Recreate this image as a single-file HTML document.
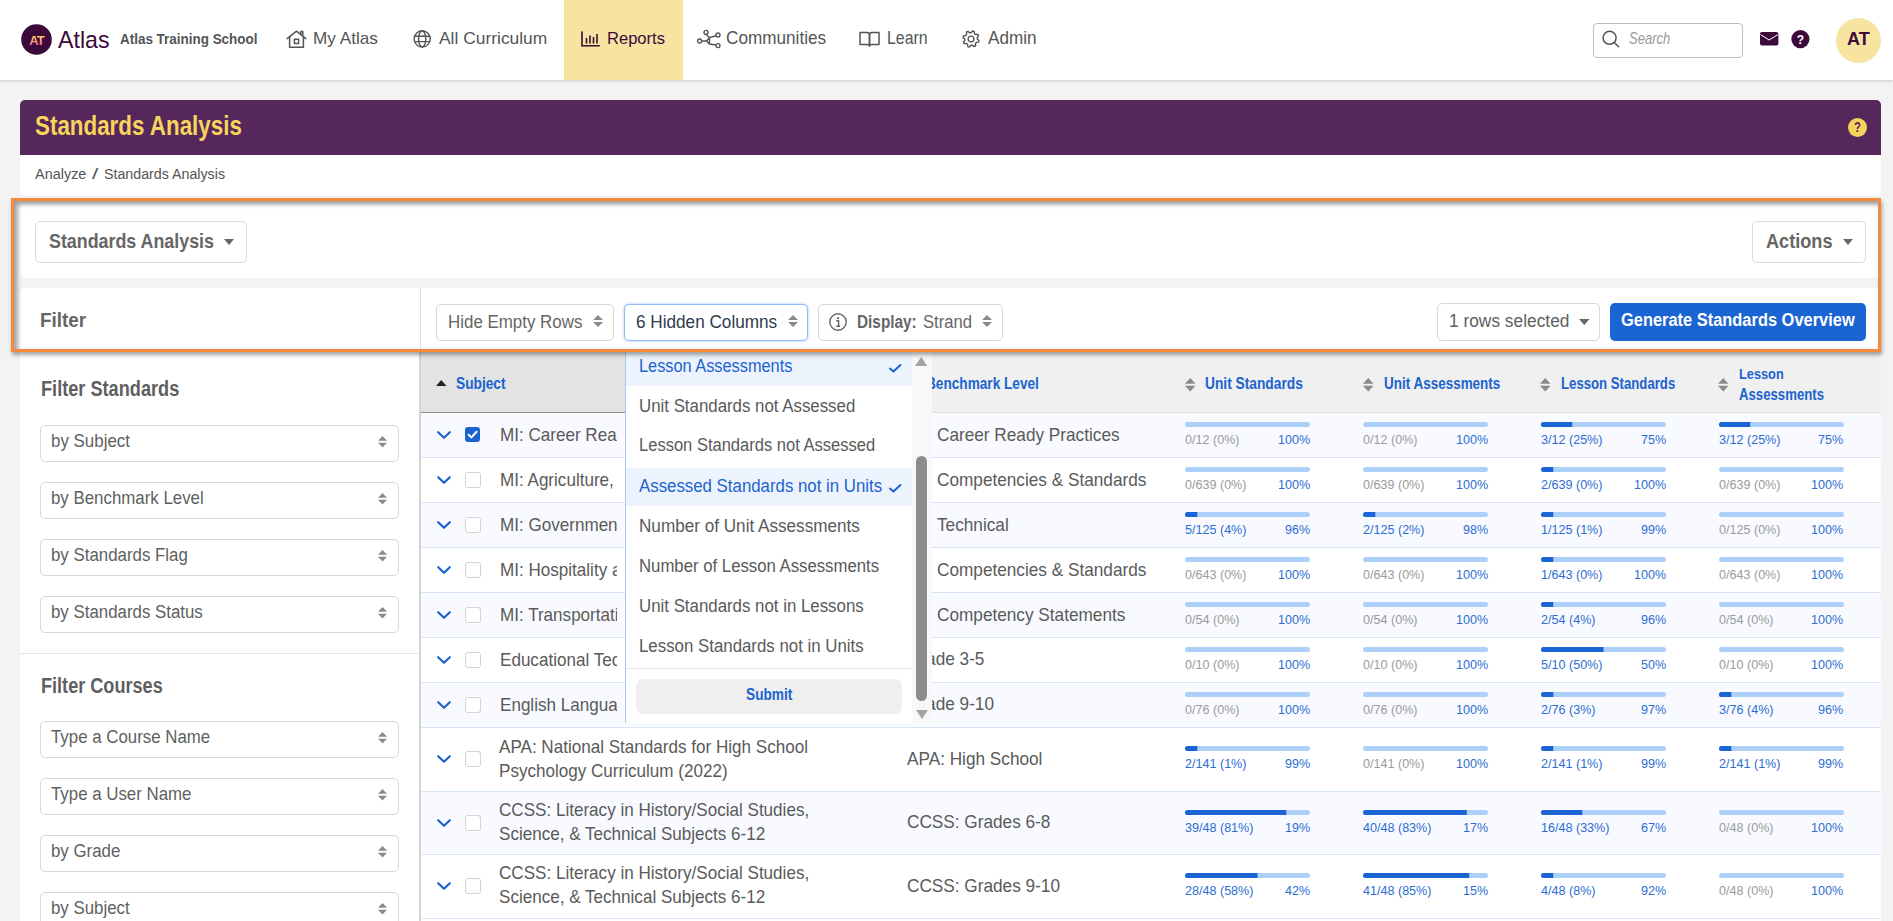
<!DOCTYPE html><html><head><meta charset="utf-8"><style>
html,body{margin:0;padding:0;}
body{width:1893px;height:921px;overflow:hidden;background:#f3f3f3;position:relative;font-family:"Liberation Sans",sans-serif;}
.a{position:absolute;box-sizing:border-box;}
.t{position:absolute;white-space:nowrap;transform-origin:0 0;}
svg.a{overflow:visible;}
</style></head><body>
<div class="a" style="left:0px;top:0px;width:1893px;height:80px;background:#fff;box-shadow:0 1px 3px rgba(0,0,0,.18);"></div>
<div class="a" style="left:564px;top:0px;width:119px;height:80px;background:#f8e4a1;"></div>
<svg class="a" style="left:21px;top:24px;" width="31" height="31" viewBox="0 0 31 31"><circle cx="15.5" cy="15.5" r="15.3" fill="#3b0a3b"/><defs><linearGradient id="lg" x1="0" y1="0" x2="0" y2="1"><stop offset="0.1" stop-color="#fbd65a"/><stop offset="0.55" stop-color="#f7a570"/><stop offset="1" stop-color="#ee4fb2"/></linearGradient></defs><text x="15.5" y="20.5" text-anchor="middle" font-family="Liberation Sans" font-weight="bold" font-size="13" fill="url(#lg)" letter-spacing="-1">AT</text></svg>
<span class="t" style="left:58.00px;top:28.81px;font-size:23.26px;line-height:23.26px;color:#3b0a3b;transform:scaleX(0.9961);">Atlas</span>
<span class="t" style="left:120.40px;top:31.03px;font-size:15.55px;line-height:15.55px;color:#555;font-weight:bold;transform:scaleX(0.8648);">Atlas Training School</span>
<span class="t" style="left:313.40px;top:30.18px;font-size:17.15px;line-height:17.15px;color:#555;transform:scaleX(1.0031);">My Atlas</span>
<span class="t" style="left:438.80px;top:30.06px;font-size:17.30px;line-height:17.30px;color:#555;transform:scaleX(1.0070);">All Curriculum</span>
<span class="t" style="left:607.40px;top:30.06px;font-size:17.30px;line-height:17.30px;color:#3b0a3b;transform:scaleX(0.9579);">Reports</span>
<span class="t" style="left:725.80px;top:30.11px;font-size:17.59px;line-height:17.59px;color:#555;transform:scaleX(0.9757);">Communities</span>
<span class="t" style="left:886.80px;top:30.11px;font-size:17.59px;line-height:17.59px;color:#555;transform:scaleX(0.9022);">Learn</span>
<span class="t" style="left:987.60px;top:30.11px;font-size:17.59px;line-height:17.59px;color:#555;transform:scaleX(0.9719);">Admin</span>
<div class="a" style="left:1593px;top:23px;width:150px;height:35px;background:#fff;border:1px solid #bdbdbd;border-radius:4px;"></div>
<span class="t" style="left:1629.00px;top:31.16px;font-size:15.99px;line-height:15.99px;color:#9a9a9a;font-style:italic;transform:scaleX(0.8166);">Search</span>
<div class="a" style="left:1836px;top:18px;width:45px;height:45px;background:#f8e4a1;border-radius:50%;"></div>
<span class="t" style="left:1847.30px;top:29.75px;font-size:18.60px;line-height:18.60px;color:#3b0a3b;font-weight:bold;transform:scaleX(0.9701);">AT</span>
<div class="a" style="left:20px;top:100px;width:1861px;height:55px;background:#55275a;border-radius:5px 5px 0 0;"></div>
<span class="t" style="left:35.10px;top:112.76px;font-size:26.74px;line-height:26.74px;color:#f7d45c;font-weight:bold;transform:scaleX(0.8370);">Standards Analysis</span>
<div class="a" style="left:1848px;top:118px;width:19px;height:19px;background:#f5d25a;border-radius:50%;"></div>
<span class="t" style="left:1854.00px;top:120.81px;font-size:13.81px;line-height:13.81px;color:#55275a;font-weight:bold;transform:scaleX(0.8284);">?</span>
<div class="a" style="left:20px;top:155px;width:1861px;height:41px;background:#fff;border-radius:0 0 5px 5px;"></div>
<span class="t" style="left:35.00px;top:166.67px;font-size:14.68px;line-height:14.68px;color:#555;transform:scaleX(0.9847);">Analyze</span>
<span class="t" style="left:92.20px;top:166.67px;font-size:14.68px;line-height:14.68px;color:#555;transform:scaleX(1.5366);">/</span>
<span class="t" style="left:103.80px;top:166.67px;font-size:14.68px;line-height:14.68px;color:#555;transform:scaleX(0.9696);">Standards Analysis</span>
<svg class="a" style="left:286px;top:30px;" width="21" height="18" viewBox="0 0 21 18"><g fill="none" stroke="#555" stroke-width="1.5" stroke-linejoin="round" stroke-linecap="round"><path d="M1.2 8.6 L10.5 1.2 L19.8 8.6"/><path d="M3.6 7 V17.2 H17.4 V7"/><path d="M14.8 3.6 V1.4 H16.8 V5.2"/><rect x="8.4" y="9.2" width="4.2" height="4.2"/></g></svg>
<svg class="a" style="left:413px;top:30px;" width="19" height="18" viewBox="0 0 19 18"><g fill="none" stroke="#555" stroke-width="1.4"><circle cx="9.2" cy="8.9" r="8.1"/><ellipse cx="9.2" cy="8.9" rx="3.6" ry="8.1"/><path d="M1.4 6.2 H17 M1.4 11.6 H17"/></g></svg>
<svg class="a" style="left:581px;top:31px;" width="19" height="16" viewBox="0 0 19 16"><g fill="none" stroke="#3b0a3b" stroke-width="1.6" stroke-linecap="round"><path d="M1 1 V14.8 H18.2"/><path d="M5.5 7.5 V12 M9 5 V12 M12.5 6.5 V12 M16 3.5 V12"/></g></svg>
<svg class="a" style="left:697px;top:30px;" width="24" height="18" viewBox="0 0 24 18"><g fill="none" stroke="#555" stroke-width="1.4"><circle cx="2.6" cy="11" r="2"/><circle cx="9" cy="2.4" r="2"/><circle cx="21" cy="5" r="2"/><circle cx="21" cy="15.6" r="2"/><path d="M4.6 11 H9.5 L12.5 7.5 L19.2 5.8 M9.5 11 L12.5 14 L19.2 15 M9 4.4 L12.5 7.5 M12.5 14 L12.5 7.5"/></g></svg>
<svg class="a" style="left:859px;top:31px;" width="21" height="16" viewBox="0 0 21 16"><g fill="none" stroke="#555" stroke-width="1.5" stroke-linejoin="round"><path d="M1 1.5 H8 Q10.5 1.5 10.5 4 V15 Q10.5 13.5 8 13.5 H1 Z"/><path d="M20 1.5 H13 Q10.5 1.5 10.5 4 V15 Q10.5 13.5 13 13.5 H20 Z"/></g></svg>
<svg class="a" style="left:962px;top:30px;" width="18" height="18" viewBox="0 0 18 18"><g fill="none" stroke="#555" stroke-width="1.4" stroke-linejoin="round"><path d="M9.00 2.70 L10.60 0.96 L12.14 1.42 L12.50 3.76 L13.45 4.55 L15.82 4.44 L16.58 5.86 L15.18 7.77 L15.30 9.00 L17.04 10.60 L16.58 12.14 L14.24 12.50 L13.45 13.45 L13.56 15.82 L12.14 16.58 L10.23 15.18 L9.00 15.30 L7.40 17.04 L5.86 16.58 L5.50 14.24 L4.55 13.45 L2.18 13.56 L1.42 12.14 L2.82 10.23 L2.70 9.00 L0.96 7.40 L1.42 5.86 L3.76 5.50 L4.55 4.55 L4.44 2.18 L5.86 1.42 L7.77 2.82Z"/><circle cx="9" cy="9" r="2.9"/></g></svg>
<svg class="a" style="left:1602px;top:30px;" width="18" height="18" viewBox="0 0 18 18"><g fill="none" stroke="#555" stroke-width="1.5" stroke-linecap="round"><circle cx="7.6" cy="7.8" r="6.5"/><path d="M12.3 12.5 L16.6 16.8"/></g></svg>
<svg class="a" style="left:1760px;top:32px;" width="19" height="14" viewBox="0 0 19 14"><rect x="0" y="0" width="18.4" height="13.6" rx="2" fill="#3b0a3b"/><path d="M0.5 2.6 L9.2 8 L17.9 2.6" fill="none" stroke="#fff" stroke-width="1"/></svg>
<svg class="a" style="left:1791px;top:30px;" width="19" height="19" viewBox="0 0 19 19"><circle cx="9.4" cy="9.1" r="9.1" fill="#3b0a3b"/><text x="9.4" y="13.6" text-anchor="middle" font-family="Liberation Sans" font-weight="bold" font-size="12" fill="#fff">?</text></svg>
<div class="a" style="left:20px;top:205px;width:1861px;height:73px;background:#fff;border-radius:5px;"></div>
<div class="a" style="left:20px;top:288px;width:1861px;height:633px;background:#fff;border-radius:5px 5px 0 0;"></div>
<div class="a" style="left:35px;top:221px;width:212px;height:42px;border:1px solid #dadada;border-radius:5px;background:#fff;"></div>
<span class="t" style="left:48.80px;top:230.82px;font-size:20.64px;line-height:20.64px;color:#666;font-weight:bold;transform:scaleX(0.8654);">Standards Analysis</span>
<svg class="a" style="left:224px;top:239px;" width="10" height="6" viewBox="0 0 10 6"><path d="M0 0 H10 L5 6 Z" fill="#666"/></svg>
<div class="a" style="left:1752px;top:221px;width:114px;height:42px;border:1px solid #dadada;border-radius:5px;background:#fff;"></div>
<span class="t" style="left:1765.90px;top:231.56px;font-size:19.77px;line-height:19.77px;color:#666;font-weight:bold;transform:scaleX(0.9171);">Actions</span>
<svg class="a" style="left:1843px;top:239px;" width="10" height="6" viewBox="0 0 10 6"><path d="M0 0 H10 L5 6 Z" fill="#666"/></svg>
<div class="a" style="left:420px;top:288px;width:1px;height:64px;background:#dedede;"></div>
<div class="a" style="left:419px;top:352px;width:2px;height:569px;background:#d4d4d4;"></div>
<span class="t" style="left:40.40px;top:309.97px;font-size:20.35px;line-height:20.35px;color:#666;font-weight:bold;transform:scaleX(0.9286);">Filter</span>
<div class="a" style="left:436px;top:304px;width:178px;height:37px;border:1px solid #d8d8d8;border-radius:5px;background:#fff;"></div>
<span class="t" style="left:447.80px;top:312.82px;font-size:18.75px;line-height:18.75px;color:#666;transform:scaleX(0.9020);">Hide Empty Rows</span>
<svg class="a" style="left:593px;top:315px;" width="10" height="12" viewBox="0 0 10 12"><path d="M5.0 0 L10 5.04 H0 Z M0 6.959999999999999 H10 L5.0 12 Z" fill="#8a8a8a"/></svg>
<div class="a" style="left:624px;top:304px;width:184px;height:37px;border:1px solid #8db9f4;border-radius:5px;background:#fff;box-shadow:0 0 2px 1px rgba(120,170,240,.35);"></div>
<span class="t" style="left:635.50px;top:312.82px;font-size:18.75px;line-height:18.75px;color:#2f3a4e;transform:scaleX(0.9154);">6 Hidden Columns</span>
<svg class="a" style="left:788px;top:315px;" width="10" height="12" viewBox="0 0 10 12"><path d="M5.0 0 L10 5.04 H0 Z M0 6.959999999999999 H10 L5.0 12 Z" fill="#8a8a8a"/></svg>
<div class="a" style="left:818px;top:304px;width:185px;height:37px;border:1px solid #d8d8d8;border-radius:5px;background:#fff;"></div>
<svg class="a" style="left:829px;top:313px;" width="18" height="18" viewBox="0 0 18 18"><circle cx="9" cy="9" r="8.2" fill="none" stroke="#666" stroke-width="1.4"/><circle cx="9" cy="5.2" r="1.1" fill="#666"/><path d="M7.2 7.8 H9.6 V13 M7.3 13.2 H11" fill="none" stroke="#666" stroke-width="1.4"/></svg>
<span class="t" style="left:857.00px;top:312.82px;font-size:18.75px;line-height:18.75px;color:#666;font-weight:bold;transform:scaleX(0.8184);">Display:</span>
<span class="t" style="left:922.50px;top:312.82px;font-size:18.75px;line-height:18.75px;color:#666;transform:scaleX(0.8869);">Strand</span>
<svg class="a" style="left:982px;top:315px;" width="10" height="12" viewBox="0 0 10 12"><path d="M5.0 0 L10 5.04 H0 Z M0 6.959999999999999 H10 L5.0 12 Z" fill="#8a8a8a"/></svg>
<div class="a" style="left:1437px;top:303px;width:163px;height:38px;border:1px solid #d8d8d8;border-radius:5px;background:#fff;"></div>
<span class="t" style="left:1449.00px;top:312.14px;font-size:18.02px;line-height:18.02px;color:#5f5f5f;transform:scaleX(0.9620);">1 rows selected</span>
<svg class="a" style="left:1579px;top:319px;" width="10.5" height="6" viewBox="0 0 10.5 6"><path d="M0 0 H10.5 L5.25 6 Z" fill="#666"/></svg>
<div class="a" style="left:1610px;top:303px;width:256px;height:38px;background:#1b64d3;border-radius:5px;"></div>
<span class="t" style="left:1621.40px;top:311.30px;font-size:18.90px;line-height:18.90px;color:#fff;font-weight:bold;transform:scaleX(0.8693);">Generate Standards Overview</span>
<span class="t" style="left:40.70px;top:378.71px;font-size:21.37px;line-height:21.37px;color:#5f5f5f;font-weight:bold;transform:scaleX(0.8502);">Filter Standards</span>
<div class="a" style="left:40px;top:425px;width:359px;height:37px;border:1px solid #d8d8d8;border-radius:5px;background:#fff;"></div>
<span class="t" style="left:51.30px;top:432.17px;font-size:18.46px;line-height:18.46px;color:#5f5f5f;transform:scaleX(0.9170);">by Subject</span>
<svg class="a" style="left:378px;top:435.5px;" width="9" height="11.5" viewBox="0 0 9 11.5"><path d="M4.5 0 L9 4.83 H0 Z M0 6.67 H9 L4.5 11.5 Z" fill="#8a8a8a"/></svg>
<div class="a" style="left:40px;top:482px;width:359px;height:37px;border:1px solid #d8d8d8;border-radius:5px;background:#fff;"></div>
<span class="t" style="left:51.30px;top:489.17px;font-size:18.46px;line-height:18.46px;color:#5f5f5f;transform:scaleX(0.9140);">by Benchmark Level</span>
<svg class="a" style="left:378px;top:492.5px;" width="9" height="11.5" viewBox="0 0 9 11.5"><path d="M4.5 0 L9 4.83 H0 Z M0 6.67 H9 L4.5 11.5 Z" fill="#8a8a8a"/></svg>
<div class="a" style="left:40px;top:539px;width:359px;height:37px;border:1px solid #d8d8d8;border-radius:5px;background:#fff;"></div>
<span class="t" style="left:51.30px;top:546.17px;font-size:18.46px;line-height:18.46px;color:#5f5f5f;transform:scaleX(0.9140);">by Standards Flag</span>
<svg class="a" style="left:378px;top:549.5px;" width="9" height="11.5" viewBox="0 0 9 11.5"><path d="M4.5 0 L9 4.83 H0 Z M0 6.67 H9 L4.5 11.5 Z" fill="#8a8a8a"/></svg>
<div class="a" style="left:40px;top:596px;width:359px;height:37px;border:1px solid #d8d8d8;border-radius:5px;background:#fff;"></div>
<span class="t" style="left:51.30px;top:603.17px;font-size:18.46px;line-height:18.46px;color:#5f5f5f;transform:scaleX(0.9140);">by Standards Status</span>
<svg class="a" style="left:378px;top:606.5px;" width="9" height="11.5" viewBox="0 0 9 11.5"><path d="M4.5 0 L9 4.83 H0 Z M0 6.67 H9 L4.5 11.5 Z" fill="#8a8a8a"/></svg>
<div class="a" style="left:20px;top:653px;width:400px;height:1px;background:#e4e4e4;"></div>
<span class="t" style="left:40.70px;top:675.36px;font-size:21.66px;line-height:21.66px;color:#5f5f5f;font-weight:bold;transform:scaleX(0.8359);">Filter Courses</span>
<div class="a" style="left:40px;top:721px;width:359px;height:37px;border:1px solid #d8d8d8;border-radius:5px;background:#fff;"></div>
<span class="t" style="left:51.30px;top:728.17px;font-size:18.46px;line-height:18.46px;color:#5f5f5f;transform:scaleX(0.9140);">Type a Course Name</span>
<svg class="a" style="left:378px;top:731.5px;" width="9" height="11.5" viewBox="0 0 9 11.5"><path d="M4.5 0 L9 4.83 H0 Z M0 6.67 H9 L4.5 11.5 Z" fill="#8a8a8a"/></svg>
<div class="a" style="left:40px;top:778px;width:359px;height:37px;border:1px solid #d8d8d8;border-radius:5px;background:#fff;"></div>
<span class="t" style="left:51.30px;top:785.17px;font-size:18.46px;line-height:18.46px;color:#5f5f5f;transform:scaleX(0.9140);">Type a User Name</span>
<svg class="a" style="left:378px;top:788.5px;" width="9" height="11.5" viewBox="0 0 9 11.5"><path d="M4.5 0 L9 4.83 H0 Z M0 6.67 H9 L4.5 11.5 Z" fill="#8a8a8a"/></svg>
<div class="a" style="left:40px;top:835px;width:359px;height:37px;border:1px solid #d8d8d8;border-radius:5px;background:#fff;"></div>
<span class="t" style="left:51.30px;top:842.17px;font-size:18.46px;line-height:18.46px;color:#5f5f5f;transform:scaleX(0.9140);">by Grade</span>
<svg class="a" style="left:378px;top:845.5px;" width="9" height="11.5" viewBox="0 0 9 11.5"><path d="M4.5 0 L9 4.83 H0 Z M0 6.67 H9 L4.5 11.5 Z" fill="#8a8a8a"/></svg>
<div class="a" style="left:40px;top:892px;width:359px;height:37px;border:1px solid #d8d8d8;border-radius:5px;background:#fff;"></div>
<span class="t" style="left:51.30px;top:899.17px;font-size:18.46px;line-height:18.46px;color:#5f5f5f;transform:scaleX(0.9140);">by Subject</span>
<svg class="a" style="left:378px;top:902.5px;" width="9" height="11.5" viewBox="0 0 9 11.5"><path d="M4.5 0 L9 4.83 H0 Z M0 6.67 H9 L4.5 11.5 Z" fill="#8a8a8a"/></svg>
<div class="a" style="left:421px;top:352px;width:1460px;height:60px;background:#f0f0f0;"></div>
<div class="a" style="left:421px;top:352px;width:475px;height:60px;background:#e3e3e3;"></div>
<div class="a" style="left:421px;top:412px;width:475px;height:1px;background:#8f8f8f;"></div>
<div class="a" style="left:896px;top:412px;width:985px;height:1px;background:#dcdcdc;"></div>
<svg class="a" style="left:436px;top:380px;" width="10.5" height="6" viewBox="0 0 10.5 6"><path d="M5.25 0 L10.5 6 H0 Z" fill="#222"/></svg>
<span class="t" style="left:456.20px;top:375.99px;font-size:15.84px;line-height:15.84px;color:#1b63cf;font-weight:bold;transform:scaleX(0.8664);">Subject</span>
<span class="t" style="left:926.00px;top:375.99px;font-size:15.84px;line-height:15.84px;color:#1b63cf;font-weight:bold;transform:scaleX(0.8610);">Benchmark Level</span>
<svg class="a" style="left:1185px;top:378px;" width="10.5" height="13.5" viewBox="0 0 10.5 13.5"><path d="M5.25 0 L10.5 5.67 H0 Z M0 7.829999999999999 H10.5 L5.25 13.5 Z" fill="#8a8a8a"/></svg>
<span class="t" style="left:1205.40px;top:375.99px;font-size:15.84px;line-height:15.84px;color:#1b63cf;font-weight:bold;transform:scaleX(0.8687);">Unit Standards</span>
<svg class="a" style="left:1363px;top:378px;" width="10.5" height="13.5" viewBox="0 0 10.5 13.5"><path d="M5.25 0 L10.5 5.67 H0 Z M0 7.829999999999999 H10.5 L5.25 13.5 Z" fill="#8a8a8a"/></svg>
<span class="t" style="left:1383.50px;top:375.99px;font-size:15.84px;line-height:15.84px;color:#1b63cf;font-weight:bold;transform:scaleX(0.8513);">Unit Assessments</span>
<svg class="a" style="left:1540px;top:378px;" width="10.5" height="13.5" viewBox="0 0 10.5 13.5"><path d="M5.25 0 L10.5 5.67 H0 Z M0 7.829999999999999 H10.5 L5.25 13.5 Z" fill="#8a8a8a"/></svg>
<span class="t" style="left:1561.30px;top:375.99px;font-size:15.84px;line-height:15.84px;color:#1b63cf;font-weight:bold;transform:scaleX(0.8326);">Lesson Standards</span>
<svg class="a" style="left:1718px;top:378px;" width="10.5" height="13.5" viewBox="0 0 10.5 13.5"><path d="M5.25 0 L10.5 5.67 H0 Z M0 7.829999999999999 H10.5 L5.25 13.5 Z" fill="#8a8a8a"/></svg>
<span class="t" style="left:1739.00px;top:365.75px;font-size:15.41px;line-height:15.41px;color:#1b63cf;font-weight:bold;transform:scaleX(0.8293);">Lesson</span>
<span class="t" style="left:1739.00px;top:386.61px;font-size:15.70px;line-height:15.70px;color:#1b63cf;font-weight:bold;transform:scaleX(0.8405);">Assessments</span>
<div class="a" style="left:421px;top:413px;width:1460px;height:44px;background:#f8faff;"></div>
<div class="a" style="left:421px;top:457px;width:1460px;height:1px;background:#d8e6f8;"></div>
<svg class="a" style="left:437px;top:430.5px;" width="14" height="8" viewBox="0 0 14 8"><path d="M1.2 1.2 L7 6.8 L12.8 1.2" fill="none" stroke="#1b63cf" stroke-width="2.2" stroke-linecap="round" stroke-linejoin="round"/></svg>
<svg class="a" style="left:465px;top:427.0px;" width="15" height="15" viewBox="0 0 15 15"><rect x="0" y="0" width="15" height="15" rx="3" fill="#1b63cf"/><path d="M3.6 7.8 L6.4 10.4 L11.6 4.8" fill="none" stroke="#fff" stroke-width="2" stroke-linecap="round" stroke-linejoin="round"/></svg>
<div class="a" style="left:421px;top:413px;width:196px;height:44px;overflow:hidden;">
<span class="t" style="left:78.60px;top:12.92px;font-size:18.17px;line-height:18.17px;color:#5a5a5a;transform:scaleX(0.9400);">MI: Career Ready Practices</span>
</div>
<span class="t" style="left:937.20px;top:425.89px;font-size:18.31px;line-height:18.31px;color:#5a5a5a;transform:scaleX(0.9400);">Career Ready Practices</span>
<svg class="a" style="left:1185px;top:421.9px;" width="125" height="5" viewBox="0 0 125 5"><rect x="0" y="0" width="125" height="5" rx="2.5" fill="#acd0fa"/></svg>
<span class="t" style="left:1185.00px;top:432.65px;font-size:13.52px;line-height:13.52px;color:#9a9a9a;transform:scaleX(0.9300);">0/12 (0%)</span>
<span class="t" style="left:1277.87px;top:432.65px;font-size:13.52px;line-height:13.52px;color:#2d6dd2;transform:scaleX(0.9300);">100%</span>
<svg class="a" style="left:1363px;top:421.9px;" width="125" height="5" viewBox="0 0 125 5"><rect x="0" y="0" width="125" height="5" rx="2.5" fill="#acd0fa"/></svg>
<span class="t" style="left:1363.00px;top:432.65px;font-size:13.52px;line-height:13.52px;color:#9a9a9a;transform:scaleX(0.9300);">0/12 (0%)</span>
<span class="t" style="left:1455.87px;top:432.65px;font-size:13.52px;line-height:13.52px;color:#2d6dd2;transform:scaleX(0.9300);">100%</span>
<svg class="a" style="left:1541px;top:421.9px;" width="125" height="5" viewBox="0 0 125 5"><rect x="0" y="0" width="125" height="5" rx="2.5" fill="#acd0fa"/><path d="M2.5 0 H31.25 V5 H2.5 A2.5 2.5 0 0 1 2.5 0 Z" fill="#1b64d3"/></svg>
<span class="t" style="left:1541.00px;top:432.65px;font-size:13.52px;line-height:13.52px;color:#2d6dd2;transform:scaleX(0.9300);">3/12 (25%)</span>
<span class="t" style="left:1640.89px;top:432.65px;font-size:13.52px;line-height:13.52px;color:#2d6dd2;transform:scaleX(0.9300);">75%</span>
<svg class="a" style="left:1718.5px;top:421.9px;" width="125" height="5" viewBox="0 0 125 5"><rect x="0" y="0" width="125" height="5" rx="2.5" fill="#acd0fa"/><path d="M2.5 0 H31.25 V5 H2.5 A2.5 2.5 0 0 1 2.5 0 Z" fill="#1b64d3"/></svg>
<span class="t" style="left:1718.50px;top:432.65px;font-size:13.52px;line-height:13.52px;color:#2d6dd2;transform:scaleX(0.9300);">3/12 (25%)</span>
<span class="t" style="left:1818.39px;top:432.65px;font-size:13.52px;line-height:13.52px;color:#2d6dd2;transform:scaleX(0.9300);">75%</span>
<div class="a" style="left:421px;top:458px;width:1460px;height:44px;background:#ffffff;"></div>
<div class="a" style="left:421px;top:502px;width:1460px;height:1px;background:#d8e6f8;"></div>
<svg class="a" style="left:437px;top:475.5px;" width="14" height="8" viewBox="0 0 14 8"><path d="M1.2 1.2 L7 6.8 L12.8 1.2" fill="none" stroke="#1b63cf" stroke-width="2.2" stroke-linecap="round" stroke-linejoin="round"/></svg>
<div class="a" style="left:465px;top:471.5px;width:16px;height:16px;border:1px solid #d3d3d3;border-radius:3px;background:#fff;"></div>
<div class="a" style="left:421px;top:458px;width:196px;height:44px;overflow:hidden;">
<span class="t" style="left:78.60px;top:12.92px;font-size:18.17px;line-height:18.17px;color:#5a5a5a;transform:scaleX(0.9400);">MI: Agriculture, Food and Natural Resources</span>
</div>
<span class="t" style="left:937.20px;top:470.89px;font-size:18.31px;line-height:18.31px;color:#5a5a5a;transform:scaleX(0.9400);">Competencies &amp; Standards</span>
<svg class="a" style="left:1185px;top:466.9px;" width="125" height="5" viewBox="0 0 125 5"><rect x="0" y="0" width="125" height="5" rx="2.5" fill="#acd0fa"/></svg>
<span class="t" style="left:1185.00px;top:477.65px;font-size:13.52px;line-height:13.52px;color:#9a9a9a;transform:scaleX(0.9300);">0/639 (0%)</span>
<span class="t" style="left:1277.87px;top:477.65px;font-size:13.52px;line-height:13.52px;color:#2d6dd2;transform:scaleX(0.9300);">100%</span>
<svg class="a" style="left:1363px;top:466.9px;" width="125" height="5" viewBox="0 0 125 5"><rect x="0" y="0" width="125" height="5" rx="2.5" fill="#acd0fa"/></svg>
<span class="t" style="left:1363.00px;top:477.65px;font-size:13.52px;line-height:13.52px;color:#9a9a9a;transform:scaleX(0.9300);">0/639 (0%)</span>
<span class="t" style="left:1455.87px;top:477.65px;font-size:13.52px;line-height:13.52px;color:#2d6dd2;transform:scaleX(0.9300);">100%</span>
<svg class="a" style="left:1541px;top:466.9px;" width="125" height="5" viewBox="0 0 125 5"><rect x="0" y="0" width="125" height="5" rx="2.5" fill="#acd0fa"/><path d="M2.5 0 H12.3 V5 H2.5 A2.5 2.5 0 0 1 2.5 0 Z" fill="#1b64d3"/></svg>
<span class="t" style="left:1541.00px;top:477.65px;font-size:13.52px;line-height:13.52px;color:#2d6dd2;transform:scaleX(0.9300);">2/639 (0%)</span>
<span class="t" style="left:1633.87px;top:477.65px;font-size:13.52px;line-height:13.52px;color:#2d6dd2;transform:scaleX(0.9300);">100%</span>
<svg class="a" style="left:1718.5px;top:466.9px;" width="125" height="5" viewBox="0 0 125 5"><rect x="0" y="0" width="125" height="5" rx="2.5" fill="#acd0fa"/></svg>
<span class="t" style="left:1718.50px;top:477.65px;font-size:13.52px;line-height:13.52px;color:#9a9a9a;transform:scaleX(0.9300);">0/639 (0%)</span>
<span class="t" style="left:1811.37px;top:477.65px;font-size:13.52px;line-height:13.52px;color:#2d6dd2;transform:scaleX(0.9300);">100%</span>
<div class="a" style="left:421px;top:503px;width:1460px;height:44px;background:#f8faff;"></div>
<div class="a" style="left:421px;top:547px;width:1460px;height:1px;background:#d8e6f8;"></div>
<svg class="a" style="left:437px;top:520.5px;" width="14" height="8" viewBox="0 0 14 8"><path d="M1.2 1.2 L7 6.8 L12.8 1.2" fill="none" stroke="#1b63cf" stroke-width="2.2" stroke-linecap="round" stroke-linejoin="round"/></svg>
<div class="a" style="left:465px;top:516.5px;width:16px;height:16px;border:1px solid #d3d3d3;border-radius:3px;background:#fff;"></div>
<div class="a" style="left:421px;top:503px;width:196px;height:44px;overflow:hidden;">
<span class="t" style="left:78.60px;top:12.92px;font-size:18.17px;line-height:18.17px;color:#5a5a5a;transform:scaleX(0.9400);">MI: Government and Public Administration</span>
</div>
<span class="t" style="left:937.20px;top:515.89px;font-size:18.31px;line-height:18.31px;color:#5a5a5a;transform:scaleX(0.9400);">Technical</span>
<svg class="a" style="left:1185px;top:511.9px;" width="125" height="5" viewBox="0 0 125 5"><rect x="0" y="0" width="125" height="5" rx="2.5" fill="#acd0fa"/><path d="M2.5 0 H12.3 V5 H2.5 A2.5 2.5 0 0 1 2.5 0 Z" fill="#1b64d3"/></svg>
<span class="t" style="left:1185.00px;top:522.65px;font-size:13.52px;line-height:13.52px;color:#2d6dd2;transform:scaleX(0.9300);">5/125 (4%)</span>
<span class="t" style="left:1284.89px;top:522.65px;font-size:13.52px;line-height:13.52px;color:#2d6dd2;transform:scaleX(0.9300);">96%</span>
<svg class="a" style="left:1363px;top:511.9px;" width="125" height="5" viewBox="0 0 125 5"><rect x="0" y="0" width="125" height="5" rx="2.5" fill="#acd0fa"/><path d="M2.5 0 H12.3 V5 H2.5 A2.5 2.5 0 0 1 2.5 0 Z" fill="#1b64d3"/></svg>
<span class="t" style="left:1363.00px;top:522.65px;font-size:13.52px;line-height:13.52px;color:#2d6dd2;transform:scaleX(0.9300);">2/125 (2%)</span>
<span class="t" style="left:1462.89px;top:522.65px;font-size:13.52px;line-height:13.52px;color:#2d6dd2;transform:scaleX(0.9300);">98%</span>
<svg class="a" style="left:1541px;top:511.9px;" width="125" height="5" viewBox="0 0 125 5"><rect x="0" y="0" width="125" height="5" rx="2.5" fill="#acd0fa"/><path d="M2.5 0 H12.3 V5 H2.5 A2.5 2.5 0 0 1 2.5 0 Z" fill="#1b64d3"/></svg>
<span class="t" style="left:1541.00px;top:522.65px;font-size:13.52px;line-height:13.52px;color:#2d6dd2;transform:scaleX(0.9300);">1/125 (1%)</span>
<span class="t" style="left:1640.89px;top:522.65px;font-size:13.52px;line-height:13.52px;color:#2d6dd2;transform:scaleX(0.9300);">99%</span>
<svg class="a" style="left:1718.5px;top:511.9px;" width="125" height="5" viewBox="0 0 125 5"><rect x="0" y="0" width="125" height="5" rx="2.5" fill="#acd0fa"/></svg>
<span class="t" style="left:1718.50px;top:522.65px;font-size:13.52px;line-height:13.52px;color:#9a9a9a;transform:scaleX(0.9300);">0/125 (0%)</span>
<span class="t" style="left:1811.37px;top:522.65px;font-size:13.52px;line-height:13.52px;color:#2d6dd2;transform:scaleX(0.9300);">100%</span>
<div class="a" style="left:421px;top:548px;width:1460px;height:44px;background:#ffffff;"></div>
<div class="a" style="left:421px;top:592px;width:1460px;height:1px;background:#d8e6f8;"></div>
<svg class="a" style="left:437px;top:565.5px;" width="14" height="8" viewBox="0 0 14 8"><path d="M1.2 1.2 L7 6.8 L12.8 1.2" fill="none" stroke="#1b63cf" stroke-width="2.2" stroke-linecap="round" stroke-linejoin="round"/></svg>
<div class="a" style="left:465px;top:561.5px;width:16px;height:16px;border:1px solid #d3d3d3;border-radius:3px;background:#fff;"></div>
<div class="a" style="left:421px;top:548px;width:196px;height:44px;overflow:hidden;">
<span class="t" style="left:78.60px;top:12.92px;font-size:18.17px;line-height:18.17px;color:#5a5a5a;transform:scaleX(0.9400);">MI: Hospitality and Tourism</span>
</div>
<span class="t" style="left:937.20px;top:560.89px;font-size:18.31px;line-height:18.31px;color:#5a5a5a;transform:scaleX(0.9400);">Competencies &amp; Standards</span>
<svg class="a" style="left:1185px;top:556.9px;" width="125" height="5" viewBox="0 0 125 5"><rect x="0" y="0" width="125" height="5" rx="2.5" fill="#acd0fa"/></svg>
<span class="t" style="left:1185.00px;top:567.65px;font-size:13.52px;line-height:13.52px;color:#9a9a9a;transform:scaleX(0.9300);">0/643 (0%)</span>
<span class="t" style="left:1277.87px;top:567.65px;font-size:13.52px;line-height:13.52px;color:#2d6dd2;transform:scaleX(0.9300);">100%</span>
<svg class="a" style="left:1363px;top:556.9px;" width="125" height="5" viewBox="0 0 125 5"><rect x="0" y="0" width="125" height="5" rx="2.5" fill="#acd0fa"/></svg>
<span class="t" style="left:1363.00px;top:567.65px;font-size:13.52px;line-height:13.52px;color:#9a9a9a;transform:scaleX(0.9300);">0/643 (0%)</span>
<span class="t" style="left:1455.87px;top:567.65px;font-size:13.52px;line-height:13.52px;color:#2d6dd2;transform:scaleX(0.9300);">100%</span>
<svg class="a" style="left:1541px;top:556.9px;" width="125" height="5" viewBox="0 0 125 5"><rect x="0" y="0" width="125" height="5" rx="2.5" fill="#acd0fa"/><path d="M2.5 0 H12.3 V5 H2.5 A2.5 2.5 0 0 1 2.5 0 Z" fill="#1b64d3"/></svg>
<span class="t" style="left:1541.00px;top:567.65px;font-size:13.52px;line-height:13.52px;color:#2d6dd2;transform:scaleX(0.9300);">1/643 (0%)</span>
<span class="t" style="left:1633.87px;top:567.65px;font-size:13.52px;line-height:13.52px;color:#2d6dd2;transform:scaleX(0.9300);">100%</span>
<svg class="a" style="left:1718.5px;top:556.9px;" width="125" height="5" viewBox="0 0 125 5"><rect x="0" y="0" width="125" height="5" rx="2.5" fill="#acd0fa"/></svg>
<span class="t" style="left:1718.50px;top:567.65px;font-size:13.52px;line-height:13.52px;color:#9a9a9a;transform:scaleX(0.9300);">0/643 (0%)</span>
<span class="t" style="left:1811.37px;top:567.65px;font-size:13.52px;line-height:13.52px;color:#2d6dd2;transform:scaleX(0.9300);">100%</span>
<div class="a" style="left:421px;top:593px;width:1460px;height:44px;background:#f8faff;"></div>
<div class="a" style="left:421px;top:637px;width:1460px;height:1px;background:#d8e6f8;"></div>
<svg class="a" style="left:437px;top:610.5px;" width="14" height="8" viewBox="0 0 14 8"><path d="M1.2 1.2 L7 6.8 L12.8 1.2" fill="none" stroke="#1b63cf" stroke-width="2.2" stroke-linecap="round" stroke-linejoin="round"/></svg>
<div class="a" style="left:465px;top:606.5px;width:16px;height:16px;border:1px solid #d3d3d3;border-radius:3px;background:#fff;"></div>
<div class="a" style="left:421px;top:593px;width:196px;height:44px;overflow:hidden;">
<span class="t" style="left:78.60px;top:12.92px;font-size:18.17px;line-height:18.17px;color:#5a5a5a;transform:scaleX(0.9400);">MI: Transportation, Distribution and Logistics</span>
</div>
<span class="t" style="left:937.20px;top:605.89px;font-size:18.31px;line-height:18.31px;color:#5a5a5a;transform:scaleX(0.9400);">Competency Statements</span>
<svg class="a" style="left:1185px;top:601.9px;" width="125" height="5" viewBox="0 0 125 5"><rect x="0" y="0" width="125" height="5" rx="2.5" fill="#acd0fa"/></svg>
<span class="t" style="left:1185.00px;top:612.65px;font-size:13.52px;line-height:13.52px;color:#9a9a9a;transform:scaleX(0.9300);">0/54 (0%)</span>
<span class="t" style="left:1277.87px;top:612.65px;font-size:13.52px;line-height:13.52px;color:#2d6dd2;transform:scaleX(0.9300);">100%</span>
<svg class="a" style="left:1363px;top:601.9px;" width="125" height="5" viewBox="0 0 125 5"><rect x="0" y="0" width="125" height="5" rx="2.5" fill="#acd0fa"/></svg>
<span class="t" style="left:1363.00px;top:612.65px;font-size:13.52px;line-height:13.52px;color:#9a9a9a;transform:scaleX(0.9300);">0/54 (0%)</span>
<span class="t" style="left:1455.87px;top:612.65px;font-size:13.52px;line-height:13.52px;color:#2d6dd2;transform:scaleX(0.9300);">100%</span>
<svg class="a" style="left:1541px;top:601.9px;" width="125" height="5" viewBox="0 0 125 5"><rect x="0" y="0" width="125" height="5" rx="2.5" fill="#acd0fa"/><path d="M2.5 0 H12.3 V5 H2.5 A2.5 2.5 0 0 1 2.5 0 Z" fill="#1b64d3"/></svg>
<span class="t" style="left:1541.00px;top:612.65px;font-size:13.52px;line-height:13.52px;color:#2d6dd2;transform:scaleX(0.9300);">2/54 (4%)</span>
<span class="t" style="left:1640.89px;top:612.65px;font-size:13.52px;line-height:13.52px;color:#2d6dd2;transform:scaleX(0.9300);">96%</span>
<svg class="a" style="left:1718.5px;top:601.9px;" width="125" height="5" viewBox="0 0 125 5"><rect x="0" y="0" width="125" height="5" rx="2.5" fill="#acd0fa"/></svg>
<span class="t" style="left:1718.50px;top:612.65px;font-size:13.52px;line-height:13.52px;color:#9a9a9a;transform:scaleX(0.9300);">0/54 (0%)</span>
<span class="t" style="left:1811.37px;top:612.65px;font-size:13.52px;line-height:13.52px;color:#2d6dd2;transform:scaleX(0.9300);">100%</span>
<div class="a" style="left:421px;top:638px;width:1460px;height:44px;background:#ffffff;"></div>
<div class="a" style="left:421px;top:682px;width:1460px;height:1px;background:#d8e6f8;"></div>
<svg class="a" style="left:437px;top:655.5px;" width="14" height="8" viewBox="0 0 14 8"><path d="M1.2 1.2 L7 6.8 L12.8 1.2" fill="none" stroke="#1b63cf" stroke-width="2.2" stroke-linecap="round" stroke-linejoin="round"/></svg>
<div class="a" style="left:465px;top:651.5px;width:16px;height:16px;border:1px solid #d3d3d3;border-radius:3px;background:#fff;"></div>
<div class="a" style="left:421px;top:638px;width:196px;height:44px;overflow:hidden;">
<span class="t" style="left:78.60px;top:12.92px;font-size:18.17px;line-height:18.17px;color:#5a5a5a;transform:scaleX(0.9400);">Educational Technology Standards</span>
</div>
<span class="t" style="left:907.00px;top:650.29px;font-size:18.31px;line-height:18.31px;color:#5a5a5a;transform:scaleX(0.9400);">Grade 3-5</span>
<svg class="a" style="left:1185px;top:646.9px;" width="125" height="5" viewBox="0 0 125 5"><rect x="0" y="0" width="125" height="5" rx="2.5" fill="#acd0fa"/></svg>
<span class="t" style="left:1185.00px;top:657.65px;font-size:13.52px;line-height:13.52px;color:#9a9a9a;transform:scaleX(0.9300);">0/10 (0%)</span>
<span class="t" style="left:1277.87px;top:657.65px;font-size:13.52px;line-height:13.52px;color:#2d6dd2;transform:scaleX(0.9300);">100%</span>
<svg class="a" style="left:1363px;top:646.9px;" width="125" height="5" viewBox="0 0 125 5"><rect x="0" y="0" width="125" height="5" rx="2.5" fill="#acd0fa"/></svg>
<span class="t" style="left:1363.00px;top:657.65px;font-size:13.52px;line-height:13.52px;color:#9a9a9a;transform:scaleX(0.9300);">0/10 (0%)</span>
<span class="t" style="left:1455.87px;top:657.65px;font-size:13.52px;line-height:13.52px;color:#2d6dd2;transform:scaleX(0.9300);">100%</span>
<svg class="a" style="left:1541px;top:646.9px;" width="125" height="5" viewBox="0 0 125 5"><rect x="0" y="0" width="125" height="5" rx="2.5" fill="#acd0fa"/><path d="M2.5 0 H62.5 V5 H2.5 A2.5 2.5 0 0 1 2.5 0 Z" fill="#1b64d3"/></svg>
<span class="t" style="left:1541.00px;top:657.65px;font-size:13.52px;line-height:13.52px;color:#2d6dd2;transform:scaleX(0.9300);">5/10 (50%)</span>
<span class="t" style="left:1640.89px;top:657.65px;font-size:13.52px;line-height:13.52px;color:#2d6dd2;transform:scaleX(0.9300);">50%</span>
<svg class="a" style="left:1718.5px;top:646.9px;" width="125" height="5" viewBox="0 0 125 5"><rect x="0" y="0" width="125" height="5" rx="2.5" fill="#acd0fa"/></svg>
<span class="t" style="left:1718.50px;top:657.65px;font-size:13.52px;line-height:13.52px;color:#9a9a9a;transform:scaleX(0.9300);">0/10 (0%)</span>
<span class="t" style="left:1811.37px;top:657.65px;font-size:13.52px;line-height:13.52px;color:#2d6dd2;transform:scaleX(0.9300);">100%</span>
<div class="a" style="left:421px;top:683px;width:1460px;height:44px;background:#f8faff;"></div>
<div class="a" style="left:421px;top:727px;width:1460px;height:1px;background:#d8e6f8;"></div>
<svg class="a" style="left:437px;top:700.5px;" width="14" height="8" viewBox="0 0 14 8"><path d="M1.2 1.2 L7 6.8 L12.8 1.2" fill="none" stroke="#1b63cf" stroke-width="2.2" stroke-linecap="round" stroke-linejoin="round"/></svg>
<div class="a" style="left:465px;top:696.5px;width:16px;height:16px;border:1px solid #d3d3d3;border-radius:3px;background:#fff;"></div>
<div class="a" style="left:421px;top:683px;width:196px;height:44px;overflow:hidden;">
<span class="t" style="left:78.60px;top:12.92px;font-size:18.17px;line-height:18.17px;color:#5a5a5a;transform:scaleX(0.9400);">English Language Proficiency</span>
</div>
<span class="t" style="left:907.00px;top:695.29px;font-size:18.31px;line-height:18.31px;color:#5a5a5a;transform:scaleX(0.9400);">Grade 9-10</span>
<svg class="a" style="left:1185px;top:691.9px;" width="125" height="5" viewBox="0 0 125 5"><rect x="0" y="0" width="125" height="5" rx="2.5" fill="#acd0fa"/></svg>
<span class="t" style="left:1185.00px;top:702.65px;font-size:13.52px;line-height:13.52px;color:#9a9a9a;transform:scaleX(0.9300);">0/76 (0%)</span>
<span class="t" style="left:1277.87px;top:702.65px;font-size:13.52px;line-height:13.52px;color:#2d6dd2;transform:scaleX(0.9300);">100%</span>
<svg class="a" style="left:1363px;top:691.9px;" width="125" height="5" viewBox="0 0 125 5"><rect x="0" y="0" width="125" height="5" rx="2.5" fill="#acd0fa"/></svg>
<span class="t" style="left:1363.00px;top:702.65px;font-size:13.52px;line-height:13.52px;color:#9a9a9a;transform:scaleX(0.9300);">0/76 (0%)</span>
<span class="t" style="left:1455.87px;top:702.65px;font-size:13.52px;line-height:13.52px;color:#2d6dd2;transform:scaleX(0.9300);">100%</span>
<svg class="a" style="left:1541px;top:691.9px;" width="125" height="5" viewBox="0 0 125 5"><rect x="0" y="0" width="125" height="5" rx="2.5" fill="#acd0fa"/><path d="M2.5 0 H12.3 V5 H2.5 A2.5 2.5 0 0 1 2.5 0 Z" fill="#1b64d3"/></svg>
<span class="t" style="left:1541.00px;top:702.65px;font-size:13.52px;line-height:13.52px;color:#2d6dd2;transform:scaleX(0.9300);">2/76 (3%)</span>
<span class="t" style="left:1640.89px;top:702.65px;font-size:13.52px;line-height:13.52px;color:#2d6dd2;transform:scaleX(0.9300);">97%</span>
<svg class="a" style="left:1718.5px;top:691.9px;" width="125" height="5" viewBox="0 0 125 5"><rect x="0" y="0" width="125" height="5" rx="2.5" fill="#acd0fa"/><path d="M2.5 0 H12.3 V5 H2.5 A2.5 2.5 0 0 1 2.5 0 Z" fill="#1b64d3"/></svg>
<span class="t" style="left:1718.50px;top:702.65px;font-size:13.52px;line-height:13.52px;color:#2d6dd2;transform:scaleX(0.9300);">3/76 (4%)</span>
<span class="t" style="left:1818.39px;top:702.65px;font-size:13.52px;line-height:13.52px;color:#2d6dd2;transform:scaleX(0.9300);">96%</span>
<div class="a" style="left:421px;top:728px;width:1460px;height:63px;background:#ffffff;"></div>
<div class="a" style="left:421px;top:791px;width:1460px;height:1px;background:#d8e6f8;"></div>
<svg class="a" style="left:437px;top:755.0px;" width="14" height="8" viewBox="0 0 14 8"><path d="M1.2 1.2 L7 6.8 L12.8 1.2" fill="none" stroke="#1b63cf" stroke-width="2.2" stroke-linecap="round" stroke-linejoin="round"/></svg>
<div class="a" style="left:465px;top:751.0px;width:16px;height:16px;border:1px solid #d3d3d3;border-radius:3px;background:#fff;"></div>
<span class="t" style="left:499.40px;top:738.22px;font-size:18.17px;line-height:18.17px;color:#5a5a5a;transform:scaleX(0.9400);">APA: National Standards for High School</span>
<span class="t" style="left:499.40px;top:762.02px;font-size:18.17px;line-height:18.17px;color:#5a5a5a;transform:scaleX(0.9400);">Psychology Curriculum (2022)</span>
<span class="t" style="left:907.00px;top:749.79px;font-size:18.31px;line-height:18.31px;color:#5a5a5a;transform:scaleX(0.9400);">APA: High School</span>
<svg class="a" style="left:1185px;top:746.4px;" width="125" height="5" viewBox="0 0 125 5"><rect x="0" y="0" width="125" height="5" rx="2.5" fill="#acd0fa"/><path d="M2.5 0 H12.3 V5 H2.5 A2.5 2.5 0 0 1 2.5 0 Z" fill="#1b64d3"/></svg>
<span class="t" style="left:1185.00px;top:757.15px;font-size:13.52px;line-height:13.52px;color:#2d6dd2;transform:scaleX(0.9300);">2/141 (1%)</span>
<span class="t" style="left:1284.89px;top:757.15px;font-size:13.52px;line-height:13.52px;color:#2d6dd2;transform:scaleX(0.9300);">99%</span>
<svg class="a" style="left:1363px;top:746.4px;" width="125" height="5" viewBox="0 0 125 5"><rect x="0" y="0" width="125" height="5" rx="2.5" fill="#acd0fa"/></svg>
<span class="t" style="left:1363.00px;top:757.15px;font-size:13.52px;line-height:13.52px;color:#9a9a9a;transform:scaleX(0.9300);">0/141 (0%)</span>
<span class="t" style="left:1455.87px;top:757.15px;font-size:13.52px;line-height:13.52px;color:#2d6dd2;transform:scaleX(0.9300);">100%</span>
<svg class="a" style="left:1541px;top:746.4px;" width="125" height="5" viewBox="0 0 125 5"><rect x="0" y="0" width="125" height="5" rx="2.5" fill="#acd0fa"/><path d="M2.5 0 H12.3 V5 H2.5 A2.5 2.5 0 0 1 2.5 0 Z" fill="#1b64d3"/></svg>
<span class="t" style="left:1541.00px;top:757.15px;font-size:13.52px;line-height:13.52px;color:#2d6dd2;transform:scaleX(0.9300);">2/141 (1%)</span>
<span class="t" style="left:1640.89px;top:757.15px;font-size:13.52px;line-height:13.52px;color:#2d6dd2;transform:scaleX(0.9300);">99%</span>
<svg class="a" style="left:1718.5px;top:746.4px;" width="125" height="5" viewBox="0 0 125 5"><rect x="0" y="0" width="125" height="5" rx="2.5" fill="#acd0fa"/><path d="M2.5 0 H12.3 V5 H2.5 A2.5 2.5 0 0 1 2.5 0 Z" fill="#1b64d3"/></svg>
<span class="t" style="left:1718.50px;top:757.15px;font-size:13.52px;line-height:13.52px;color:#2d6dd2;transform:scaleX(0.9300);">2/141 (1%)</span>
<span class="t" style="left:1818.39px;top:757.15px;font-size:13.52px;line-height:13.52px;color:#2d6dd2;transform:scaleX(0.9300);">99%</span>
<div class="a" style="left:421px;top:792px;width:1460px;height:62px;background:#f8faff;"></div>
<div class="a" style="left:421px;top:854px;width:1460px;height:1px;background:#d8e6f8;"></div>
<svg class="a" style="left:437px;top:818.5px;" width="14" height="8" viewBox="0 0 14 8"><path d="M1.2 1.2 L7 6.8 L12.8 1.2" fill="none" stroke="#1b63cf" stroke-width="2.2" stroke-linecap="round" stroke-linejoin="round"/></svg>
<div class="a" style="left:465px;top:814.5px;width:16px;height:16px;border:1px solid #d3d3d3;border-radius:3px;background:#fff;"></div>
<span class="t" style="left:499.40px;top:800.82px;font-size:18.17px;line-height:18.17px;color:#5a5a5a;transform:scaleX(0.9400);">CCSS: Literacy in History/Social Studies,</span>
<span class="t" style="left:499.40px;top:824.62px;font-size:18.17px;line-height:18.17px;color:#5a5a5a;transform:scaleX(0.9400);">Science, &amp; Technical Subjects 6-12</span>
<span class="t" style="left:907.00px;top:813.29px;font-size:18.31px;line-height:18.31px;color:#5a5a5a;transform:scaleX(0.9400);">CCSS: Grades 6-8</span>
<svg class="a" style="left:1185px;top:809.9px;" width="125" height="5" viewBox="0 0 125 5"><rect x="0" y="0" width="125" height="5" rx="2.5" fill="#acd0fa"/><path d="M2.5 0 H101.25 V5 H2.5 A2.5 2.5 0 0 1 2.5 0 Z" fill="#1b64d3"/></svg>
<span class="t" style="left:1185.00px;top:820.65px;font-size:13.52px;line-height:13.52px;color:#2d6dd2;transform:scaleX(0.9300);">39/48 (81%)</span>
<span class="t" style="left:1284.89px;top:820.65px;font-size:13.52px;line-height:13.52px;color:#2d6dd2;transform:scaleX(0.9300);">19%</span>
<svg class="a" style="left:1363px;top:809.9px;" width="125" height="5" viewBox="0 0 125 5"><rect x="0" y="0" width="125" height="5" rx="2.5" fill="#acd0fa"/><path d="M2.5 0 H103.75 V5 H2.5 A2.5 2.5 0 0 1 2.5 0 Z" fill="#1b64d3"/></svg>
<span class="t" style="left:1363.00px;top:820.65px;font-size:13.52px;line-height:13.52px;color:#2d6dd2;transform:scaleX(0.9300);">40/48 (83%)</span>
<span class="t" style="left:1462.89px;top:820.65px;font-size:13.52px;line-height:13.52px;color:#2d6dd2;transform:scaleX(0.9300);">17%</span>
<svg class="a" style="left:1541px;top:809.9px;" width="125" height="5" viewBox="0 0 125 5"><rect x="0" y="0" width="125" height="5" rx="2.5" fill="#acd0fa"/><path d="M2.5 0 H41.25 V5 H2.5 A2.5 2.5 0 0 1 2.5 0 Z" fill="#1b64d3"/></svg>
<span class="t" style="left:1541.00px;top:820.65px;font-size:13.52px;line-height:13.52px;color:#2d6dd2;transform:scaleX(0.9300);">16/48 (33%)</span>
<span class="t" style="left:1640.89px;top:820.65px;font-size:13.52px;line-height:13.52px;color:#2d6dd2;transform:scaleX(0.9300);">67%</span>
<svg class="a" style="left:1718.5px;top:809.9px;" width="125" height="5" viewBox="0 0 125 5"><rect x="0" y="0" width="125" height="5" rx="2.5" fill="#acd0fa"/></svg>
<span class="t" style="left:1718.50px;top:820.65px;font-size:13.52px;line-height:13.52px;color:#9a9a9a;transform:scaleX(0.9300);">0/48 (0%)</span>
<span class="t" style="left:1811.37px;top:820.65px;font-size:13.52px;line-height:13.52px;color:#2d6dd2;transform:scaleX(0.9300);">100%</span>
<div class="a" style="left:421px;top:855px;width:1460px;height:63px;background:#ffffff;"></div>
<div class="a" style="left:421px;top:918px;width:1460px;height:1px;background:#d8e6f8;"></div>
<svg class="a" style="left:437px;top:882.0px;" width="14" height="8" viewBox="0 0 14 8"><path d="M1.2 1.2 L7 6.8 L12.8 1.2" fill="none" stroke="#1b63cf" stroke-width="2.2" stroke-linecap="round" stroke-linejoin="round"/></svg>
<div class="a" style="left:465px;top:878.0px;width:16px;height:16px;border:1px solid #d3d3d3;border-radius:3px;background:#fff;"></div>
<span class="t" style="left:499.40px;top:864.32px;font-size:18.17px;line-height:18.17px;color:#5a5a5a;transform:scaleX(0.9400);">CCSS: Literacy in History/Social Studies,</span>
<span class="t" style="left:499.40px;top:888.12px;font-size:18.17px;line-height:18.17px;color:#5a5a5a;transform:scaleX(0.9400);">Science, &amp; Technical Subjects 6-12</span>
<span class="t" style="left:907.00px;top:876.79px;font-size:18.31px;line-height:18.31px;color:#5a5a5a;transform:scaleX(0.9400);">CCSS: Grades 9-10</span>
<svg class="a" style="left:1185px;top:873.4px;" width="125" height="5" viewBox="0 0 125 5"><rect x="0" y="0" width="125" height="5" rx="2.5" fill="#acd0fa"/><path d="M2.5 0 H72.5 V5 H2.5 A2.5 2.5 0 0 1 2.5 0 Z" fill="#1b64d3"/></svg>
<span class="t" style="left:1185.00px;top:884.15px;font-size:13.52px;line-height:13.52px;color:#2d6dd2;transform:scaleX(0.9300);">28/48 (58%)</span>
<span class="t" style="left:1284.89px;top:884.15px;font-size:13.52px;line-height:13.52px;color:#2d6dd2;transform:scaleX(0.9300);">42%</span>
<svg class="a" style="left:1363px;top:873.4px;" width="125" height="5" viewBox="0 0 125 5"><rect x="0" y="0" width="125" height="5" rx="2.5" fill="#acd0fa"/><path d="M2.5 0 H106.25 V5 H2.5 A2.5 2.5 0 0 1 2.5 0 Z" fill="#1b64d3"/></svg>
<span class="t" style="left:1363.00px;top:884.15px;font-size:13.52px;line-height:13.52px;color:#2d6dd2;transform:scaleX(0.9300);">41/48 (85%)</span>
<span class="t" style="left:1462.89px;top:884.15px;font-size:13.52px;line-height:13.52px;color:#2d6dd2;transform:scaleX(0.9300);">15%</span>
<svg class="a" style="left:1541px;top:873.4px;" width="125" height="5" viewBox="0 0 125 5"><rect x="0" y="0" width="125" height="5" rx="2.5" fill="#acd0fa"/><path d="M2.5 0 H12.3 V5 H2.5 A2.5 2.5 0 0 1 2.5 0 Z" fill="#1b64d3"/></svg>
<span class="t" style="left:1541.00px;top:884.15px;font-size:13.52px;line-height:13.52px;color:#2d6dd2;transform:scaleX(0.9300);">4/48 (8%)</span>
<span class="t" style="left:1640.89px;top:884.15px;font-size:13.52px;line-height:13.52px;color:#2d6dd2;transform:scaleX(0.9300);">92%</span>
<svg class="a" style="left:1718.5px;top:873.4px;" width="125" height="5" viewBox="0 0 125 5"><rect x="0" y="0" width="125" height="5" rx="2.5" fill="#acd0fa"/></svg>
<span class="t" style="left:1718.50px;top:884.15px;font-size:13.52px;line-height:13.52px;color:#9a9a9a;transform:scaleX(0.9300);">0/48 (0%)</span>
<span class="t" style="left:1811.37px;top:884.15px;font-size:13.52px;line-height:13.52px;color:#2d6dd2;transform:scaleX(0.9300);">100%</span>
<div class="a" style="left:625px;top:352px;width:307px;height:371px;background:#fff;border-left:1px solid #a9c8f2;"></div>
<div class="a" style="left:912px;top:352px;width:20px;height:371px;background:#f8f8f8;"></div>
<svg class="a" style="left:915.4px;top:357.4px;" width="12.4" height="9" viewBox="0 0 12.4 9"><path d="M6.2 0 L12.4 9 H0 Z" fill="#a3a3a3"/></svg>
<div class="a" style="left:916px;top:456px;width:11px;height:245px;background:#8c8c8c;border-radius:5.5px;"></div>
<svg class="a" style="left:915.5px;top:709.5px;" width="12" height="9" viewBox="0 0 12 9"><path d="M0 0 H12 L6 9 Z" fill="#a3a3a3"/></svg>
<div class="a" style="left:626px;top:352px;width:286px;height:33.60000000000002px;background:#edf3fd;"></div>
<svg class="a" style="left:889px;top:364.1px;" width="12.5" height="8.5" viewBox="0 0 12.5 8.5"><path d="M1 4.6 L4.4 7.6 L11.5 1" fill="none" stroke="#1b63cf" stroke-width="2" stroke-linecap="round" stroke-linejoin="round"/></svg>
<span class="t" style="left:639.20px;top:356.60px;font-size:18.90px;line-height:18.90px;color:#1b63cf;transform:scaleX(0.8645);">Lesson Assessments</span>
<span class="t" style="left:639.20px;top:396.50px;font-size:18.90px;line-height:18.90px;color:#5a5a5a;transform:scaleX(0.8916);">Unit Standards not Assessed</span>
<span class="t" style="left:639.20px;top:436.40px;font-size:18.90px;line-height:18.90px;color:#5a5a5a;transform:scaleX(0.8748);">Lesson Standards not Assessed</span>
<div class="a" style="left:626px;top:468px;width:286px;height:37.5px;background:#edf3fd;"></div>
<svg class="a" style="left:889px;top:484px;" width="12.5" height="8.5" viewBox="0 0 12.5 8.5"><path d="M1 4.6 L4.4 7.6 L11.5 1" fill="none" stroke="#1b63cf" stroke-width="2" stroke-linecap="round" stroke-linejoin="round"/></svg>
<span class="t" style="left:639.20px;top:476.50px;font-size:18.90px;line-height:18.90px;color:#1b63cf;transform:scaleX(0.8907);">Assessed Standards not in Units</span>
<span class="t" style="left:639.20px;top:517.40px;font-size:18.90px;line-height:18.90px;color:#5a5a5a;transform:scaleX(0.9069);">Number of Unit Assessments</span>
<span class="t" style="left:639.20px;top:557.00px;font-size:18.90px;line-height:18.90px;color:#5a5a5a;transform:scaleX(0.8863);">Number of Lesson Assessments</span>
<span class="t" style="left:639.20px;top:597.10px;font-size:18.90px;line-height:18.90px;color:#5a5a5a;transform:scaleX(0.8915);">Unit Standards not in Lessons</span>
<span class="t" style="left:639.20px;top:637.20px;font-size:18.90px;line-height:18.90px;color:#5a5a5a;transform:scaleX(0.8915);">Lesson Standards not in Units</span>
<div class="a" style="left:626px;top:668px;width:286px;height:1px;background:#e6e6e6;"></div>
<div class="a" style="left:636px;top:679px;width:266px;height:35px;background:#efefef;border-radius:7px;"></div>
<span class="t" style="left:745.80px;top:687.21px;font-size:15.70px;line-height:15.70px;color:#1b63cf;font-weight:bold;transform:scaleX(0.8722);">Submit</span>
<div class="a" style="left:11px;top:198px;width:1870px;height:154px;border:3px solid #f5893e;box-shadow:inset 3px 3px 5px rgba(0,0,0,.38), 1px 3px 4px rgba(0,0,0,.35);"></div>
</body></html>
